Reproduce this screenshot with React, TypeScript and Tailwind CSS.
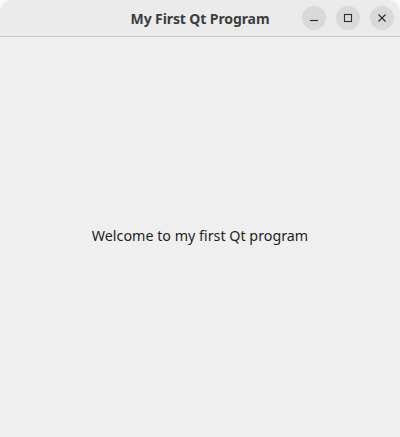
export default function App() {
  return (
    <div
      className="w-[400px] h-[437px] bg-[#fafafa] flex flex-col"
      style={{ fontFamily: '"Noto Sans", "Open Sans", sans-serif' }}
    >
      <div className="h-[36px] bg-[#ebebeb] rounded-t-[12px] flex items-center relative shrink-0">
        <div className="flex-1 text-center text-[14px] font-bold text-[#3d3d3d] tracking-[-0.1px]">
          My First Qt Program
        </div>
        <div className="absolute right-[6px] top-[6px] flex gap-[10px]">
          <button className="w-[24px] h-[24px] rounded-full bg-[#d9d9d9] flex items-center justify-center">
            <svg width="10" height="10" viewBox="0 0 10 10">
              <path d="M1 7.5h8" stroke="#2e2e2e" strokeWidth="1.2" />
            </svg>
          </button>
          <button className="w-[24px] h-[24px] rounded-full bg-[#d9d9d9] flex items-center justify-center">
            <svg width="10" height="10" viewBox="0 0 10 10">
              <rect x="1.5" y="1.5" width="7" height="7" fill="none" stroke="#2e2e2e" strokeWidth="1.1" />
            </svg>
          </button>
          <button className="w-[24px] h-[24px] rounded-full bg-[#d9d9d9] flex items-center justify-center">
            <svg width="10" height="10" viewBox="0 0 10 10">
              <path d="M1.5 1.5l7 7M8.5 1.5l-7 7" stroke="#2e2e2e" strokeWidth="1.2" />
            </svg>
          </button>
        </div>
      </div>
      <div className="h-px bg-[#c8c8c8] shrink-0" />
      <div className="flex-1 bg-[#efefef] flex items-center justify-center pb-[2px]">
        <span className="text-[14.3px] text-[#1e1e1e]">Welcome to my first Qt program</span>
      </div>
    </div>
  );
}
